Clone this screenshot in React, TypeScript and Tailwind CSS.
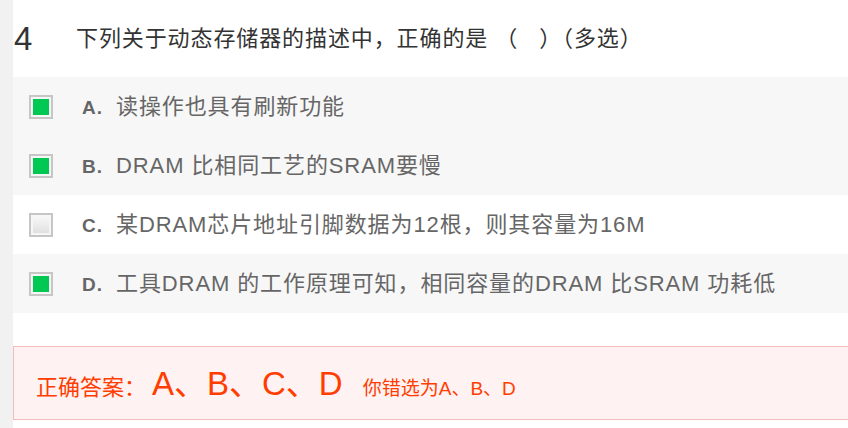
import React from "react";

const FONT = { fontFamily: '"Liberation Sans", "Noto Sans CJK SC", sans-serif' };

function Box({ checked }: { checked: boolean }) {
  return (
    <div className="w-[24px] h-[24px] border-2 border-[#c6c6c6] bg-[#f6f6f6] p-[2px] shrink-0">
      {checked ? (
        <div className="w-full h-full bg-[#00c853]" />
      ) : (
        <div className="w-full h-full bg-gradient-to-b from-[#f7f7f7] to-[#e0e0e0]" />
      )}
    </div>
  );
}

const options = [
  { k: "A.", t: "读操作也具有刷新功能", c: true, bg: "bg-[#f7f7f7]" },
  { k: "B.", t: "DRAM 比相同工艺的SRAM要慢", c: true, bg: "bg-[#f7f7f7]" },
  { k: "C.", t: "某DRAM芯片地址引脚数据为12根，则其容量为16M", c: false, bg: "bg-white" },
  { k: "D.", t: "工具DRAM 的工作原理可知，相同容量的DRAM 比SRAM 功耗低", c: true, bg: "bg-[#f7f7f7]" },
];

export default function App() {
  return (
    <div className="w-[848px] h-[428px] flex bg-white overflow-hidden" style={FONT}>
      <div className="w-[13px] shrink-0 bg-[#f1f1f1]" />
      <div className="flex-1 flex flex-col">
        <div className="h-[77px] flex items-center">
          <span className="text-[33px] text-[#333] ml-[1px] w-[62px] leading-none">4</span>
          <span className="text-[22px] text-[#333] tracking-[0.9px]">
            下列关于动态存储器的描述中，正确的是 （&nbsp;&nbsp;&nbsp;）（多选）
          </span>
        </div>
        {options.map((o) => (
          <div key={o.k} className={`h-[59px] flex items-center ${o.bg}`}>
            <div className="ml-[16px] w-[53px]">
              <Box checked={o.c} />
            </div>
            <div className="flex items-baseline">
              <span className="w-[34px] text-[19px] font-bold text-[#666] tracking-[1px]">{o.k}</span>
              <span className="text-[22px] text-[#666] tracking-[0.9px]">{o.t}</span>
            </div>
          </div>
        ))}
        <div className="h-[33px]" />
        <div className="h-[74px] border border-r-0 border-[#f2bcbc] bg-[#fff2f2] flex items-baseline pt-[12px] pl-[22px] text-[#ff3d00]">
          <span className="text-[22px]">正确答案：</span>
          <span className="text-[33px] ml-[6px]">A、B、C、D</span>
          <span className="text-[19px] ml-[20px]">你错选为A、B、D</span>
        </div>
      </div>
    </div>
  );
}
